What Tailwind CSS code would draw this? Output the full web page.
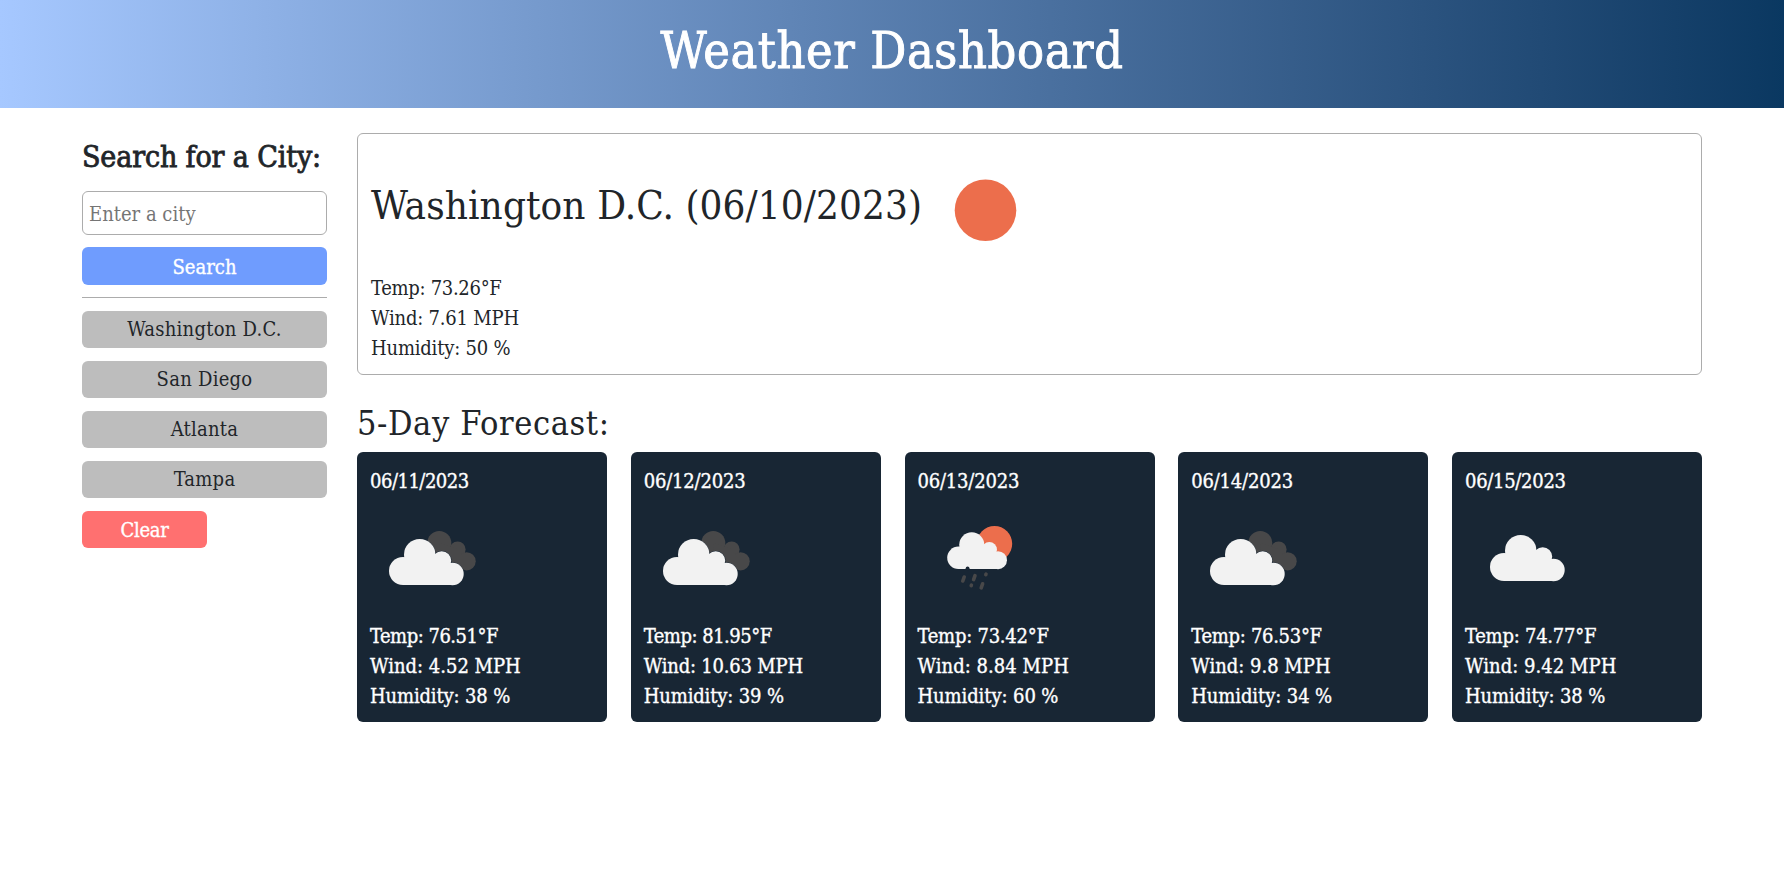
<!DOCTYPE html>
<html lang="en">
<head>
<meta charset="utf-8">
<title>Weather Dashboard</title>
<script src="https://cdn.jsdelivr.net/npm/@tailwindcss/browser@4"></script>
</head>
<body class="min-h-screen bg-white text-[#212529] text-[20px] leading-[30px] font-['Roboto_Slab','DejaVu_Serif_Condensed','DejaVu_Serif',serif]">
<svg class="hidden">
  <defs>
    <g id="cloud">
      <circle cx="49.7" cy="56.7" r="15.7"/><circle cx="33" cy="73" r="14"/><circle cx="82.5" cy="76" r="11.2"/><circle cx="71.7" cy="62.8" r="9.5"/>
      <path d="M33 87h49.5V70l-10-8-20-5-20 10z"/>
    </g>
    <g id="broken">
      <g fill="#484849"><circle cx="69.3" cy="45" r="12"/><circle cx="87.6" cy="51.4" r="8"/><circle cx="96.6" cy="63.3" r="9.1"/><path d="M69 45l18 6 9 12-4 8-22-12z"/></g>
      <use href="#cloud" fill="#182634" stroke="#182634" stroke-width="1"/>
      <use href="#cloud" fill="#f2f2f2"/>
    </g>
  </defs>
</svg>

<header class="flex h-[108px] justify-center bg-linear-to-r from-[#a6c8ff] to-[#0a3861]">
  <h1 class="mt-[21px] text-[50px] leading-[60px] tracking-[0.6px] text-white [-webkit-text-stroke:0.9px_white]">Weather Dashboard</h1>
</header>

<main class="flex gap-[30px] pl-[82px] pt-[25px]">
  <aside class="w-[245px] shrink-0">
    <h2 class="mt-[6px] whitespace-nowrap text-[30px] leading-[36px] tracking-[-0.13px] [-webkit-text-stroke:0.8px_#212529]">Search for a City:</h2>
    <input type="text" placeholder="Enter a city" class="mt-[16px] block h-[44px] w-full rounded-md border border-[#acacac] px-[6px] pt-[2px] placeholder:text-[#757575]">
    <button class="mt-3 block h-[38px] w-full rounded-md bg-[#6f9cfe] pt-[2px] text-white [-webkit-text-stroke:0.35px_white]">Search</button>
    <hr class="mt-3 border-[#acacac]">
    <div class="mt-[13px] flex flex-col gap-[13px] tracking-[0.25px]">
      <button class="h-[37px] rounded-md bg-[#bdbdbd] pb-[2px]">Washington D.C.</button>
      <button class="h-[37px] rounded-md bg-[#bdbdbd] pb-[2px]">San Diego</button>
      <button class="h-[37px] rounded-md bg-[#bdbdbd] pb-[2px]">Atlanta</button>
      <button class="h-[37px] rounded-md bg-[#bdbdbd] pb-[2px]">Tampa</button>
      <button class="h-[37px] w-[125px] rounded-md bg-[#ff7070] tracking-[-0.3px] text-white [-webkit-text-stroke:0.35px_white]">Clear</button>
    </div>
  </aside>

  <div class="w-[1345px] shrink-0">
    <section class="h-[242px] rounded-md border border-[#acacac] pl-[13px]">
      <div class="flex h-[139px] pt-[14px]">
        <h2 class="mt-[33px] text-[40px] leading-[48px] tracking-[0.1px]">Washington D.C. (06/10/2023)</h2>
        <svg class="ml-[1px] size-[125px]" viewBox="0 0 125 125"><circle cx="62.5" cy="62.3" r="30.8" fill="#ec6e4c"/></svg>
      </div>
      <p class="tracking-[-0.3px]">Temp: 73.26°F</p>
      <p class="tracking-[-0.2px]">Wind: 7.61 MPH</p>
      <p class="tracking-[-0.2px]">Humidity: 50 %</p>
    </section>

    <h3 class="mt-[28px] text-[34px] leading-[41px] tracking-[0.6px]">5-Day Forecast:</h3>
    <section class="mt-[8px] flex justify-between text-white [-webkit-text-stroke:0.35px_white]">
      <article class="h-[270px] w-[250px] rounded-md bg-[#182634] pl-[13px] pt-[14px]">
        <p class="tracking-[-0.5px]">06/11/2023</p>
        <svg class="mt-[2px] mb-[-2px] size-[125px]" viewBox="0 0 125 125"><use href="#broken"/></svg>
        <p class="tracking-[-0.5px]">Temp: 76.51°F</p>
        <p>Wind: 4.52 MPH</p>
        <p class="tracking-[-0.15px]">Humidity: 38 %</p>
      </article>
      <article class="h-[270px] w-[250px] rounded-md bg-[#182634] pl-[13px] pt-[14px]">
        <p class="tracking-[-0.2px]">06/12/2023</p>
        <svg class="mt-[2px] mb-[-2px] size-[125px]" viewBox="0 0 125 125"><use href="#broken"/></svg>
        <p class="tracking-[-0.5px]">Temp: 81.95°F</p>
        <p class="tracking-[-0.2px]">Wind: 10.63 MPH</p>
        <p class="tracking-[-0.15px]">Humidity: 39 %</p>
      </article>
      <article class="h-[270px] w-[250px] rounded-md bg-[#182634] pl-[13px] pt-[14px]">
        <p class="tracking-[-0.2px]">06/13/2023</p>
        <svg class="mt-[2px] mb-[-2px] size-[125px]" viewBox="0 0 125 125">
          <circle cx="76.5" cy="45.7" r="17.7" fill="#ec6e4c"/>
          <use href="#cloud" fill="#f2f2f2" transform="translate(14 1.4) scale(.8)"/>
          <circle cx="49.6" cy="70.3" r="1.9" fill="#182634"/>
          <g stroke="#484849" stroke-width="3.6" stroke-linecap="round"><path d="M46.2 79l-1.4 4M57 77.6l-1.4 4M64.6 85.8l-1.4 4M68 76.2l-.2.4M53.4 87.2l-.2.4"/></g>
        </svg>
        <p class="tracking-[-0.25px]">Temp: 73.42°F</p>
        <p class="tracking-[0.05px]">Wind: 8.84 MPH</p>
        <p class="tracking-[-0.1px]">Humidity: 60 %</p>
      </article>
      <article class="h-[270px] w-[250px] rounded-md bg-[#182634] pl-[13px] pt-[14px]">
        <p class="tracking-[-0.2px]">06/14/2023</p>
        <svg class="mt-[2px] mb-[-2px] size-[125px]" viewBox="0 0 125 125"><use href="#broken"/></svg>
        <p class="tracking-[-0.3px]">Temp: 76.53°F</p>
        <p>Wind: 9.8 MPH</p>
        <p class="tracking-[-0.1px]">Humidity: 34 %</p>
      </article>
      <article class="h-[270px] w-[250px] rounded-md bg-[#182634] pl-[13px] pt-[14px]">
        <p class="tracking-[-0.3px]">06/15/2023</p>
        <svg class="mt-[2px] mb-[-2px] size-[125px]" viewBox="0 0 125 125"><use href="#cloud" fill="#f2f2f2" transform="translate(6 -4)"/></svg>
        <p class="tracking-[-0.25px]">Temp: 74.77°F</p>
        <p class="tracking-[0.05px]">Wind: 9.42 MPH</p>
        <p class="tracking-[-0.15px]">Humidity: 38 %</p>
      </article>
    </section>
  </div>
</main>
</body>
</html>
